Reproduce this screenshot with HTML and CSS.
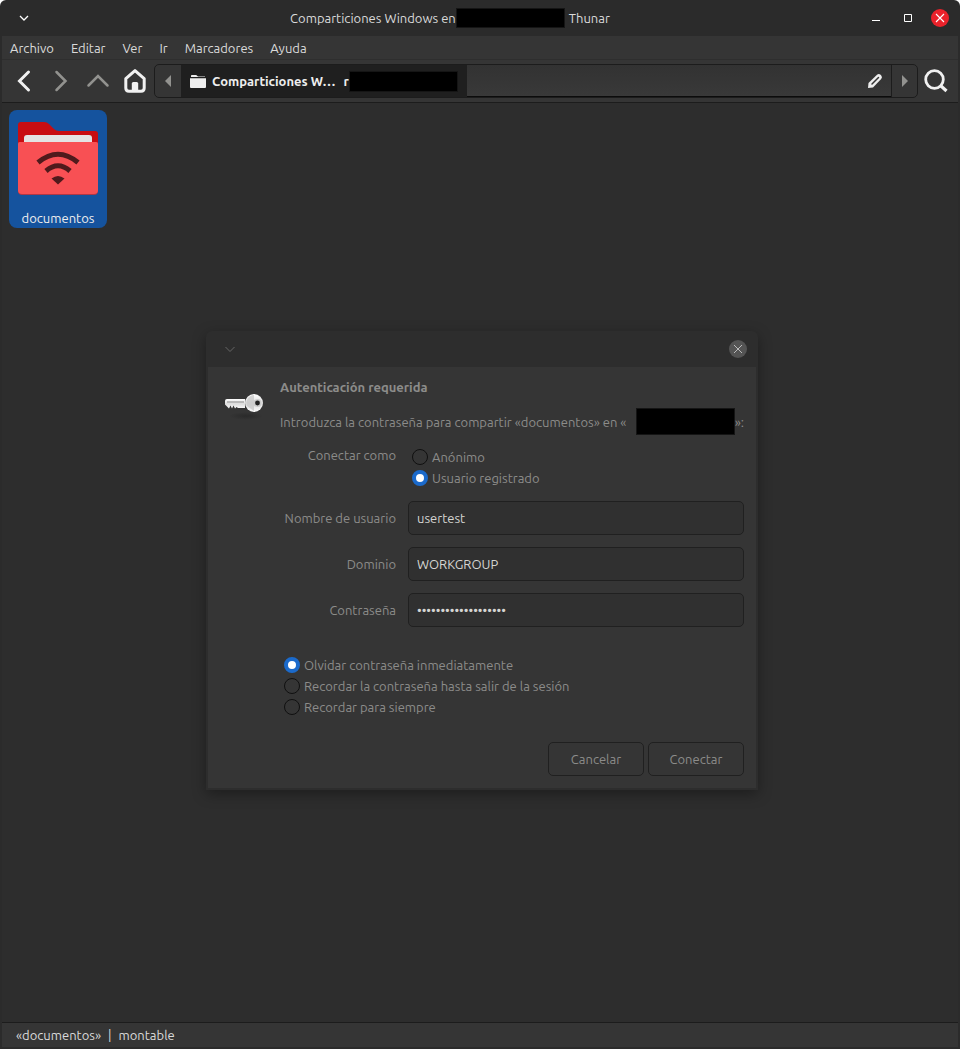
FILE: index.html
```
<!DOCTYPE html>
<html lang="es">
<head>
<meta charset="utf-8">
<title>Comparticiones Windows - Thunar</title>
<link rel="stylesheet" href="styles.css">
</head>
<body>
<div class="window">
  <header class="titlebar">
    <button class="wm-button" aria-label="Menú de la ventana">
      <svg width="20" height="20" viewBox="0 0 20 20"><path d="M6 8l4 4 4-4" fill="none" stroke="#fff" stroke-width="1.3"/></svg>
    </button>
    <h1 class="title"><span>Comparticiones Windows en</span><span class="mask mask-title"></span><span>Thunar</span></h1>
    <div class="controls">
      <button class="wm-button" aria-label="Minimizar"><svg width="20" height="20" viewBox="0 0 20 20"><path d="M6 12.5h8" stroke="#fff"/></svg></button>
      <button class="wm-button" aria-label="Maximizar"><svg width="20" height="20" viewBox="0 0 20 20"><path d="M6.500 6.500h7v7h-7z" fill="none" stroke="#fff"/></svg></button>
      <button class="wm-button" aria-label="Cerrar"><svg width="20" height="20" viewBox="0 0 20 20"><circle cx="10" cy="10" r="9" fill="#ea222b"/><path d="M6 6l8 8M14 6l-8 8" stroke="#fff" stroke-width="1.100"/></svg></button>
    </div>
  </header>

  <nav class="menubar">
    <button>Archivo</button><button>Editar</button><button>Ver</button><button>Ir</button><button>Marcadores</button><button>Ayuda</button>
  </nav>

  <div class="toolbar">
    <button class="tool" aria-label="Atrás"><svg width="28" height="28" viewBox="0 0 28 28"><path d="M18.500 5L9.500 14l9 9" class="stroke-on"/></svg></button>
    <button class="tool" aria-label="Adelante"><svg width="28" height="28" viewBox="0 0 28 28"><path d="M9.500 5l9 9-9 9" class="stroke-off"/></svg></button>
    <button class="tool" aria-label="Subir"><svg width="28" height="28" viewBox="0 0 28 28"><path d="M4.500 18.500L14 9l9.500 9.500" class="stroke-off"/></svg></button>
    <button class="tool" aria-label="Inicio"><svg width="28" height="28" viewBox="0 0 28 28"><path d="M14 3.600L4.800 11.600V21q0 3.200 3.200 3.200h12q3.200 0 3.200-3.200V11.600z" fill="none" stroke="#f1f1f1" stroke-width="3" stroke-linejoin="round"/><path d="M10.800 25v-8.500q0-1.500 1.500-1.500h3.400q1.500 0 1.500 1.500V25z" fill="#f1f1f1"/></svg></button>
    <div class="pathbar">
      <button class="path-arrow" aria-label="Ruta anterior"><svg width="8" height="12" viewBox="0 0 8 12"><path d="M7 0v12L1 6z" fill="#92928f"/></svg></button>
      <button class="crumb">
        <svg width="16" height="14" viewBox="0 0 16 14"><path d="M1 3V1.800Q1 1 1.800 1h4.400L8 2.500h7V3z" fill="#eee"/><path d="M0 4.200h16V13q0 1-1 1H1q-1 0-1-1z" fill="#eee"/></svg>
        <b>Comparticiones W…</b><b class="crumb-host">r</b><span class="mask mask-crumb"></span>
      </button>
      <div class="path-rest">
        <button class="edit" aria-label="Editar ruta"><svg width="16" height="16" viewBox="0 0 16 16"><path d="M1 15l.5-5L10 1.800q1.800-1.600 3.600 0l.6.600q1.600 1.800 0 3.600L6 14.500z" fill="#eee"/><path d="M5 11l6.500-6.500" stroke="#353535" stroke-width="1.500" stroke-linecap="round"/></svg></button>
      </div>
      <button class="path-arrow path-next" aria-label="Ruta siguiente"><svg width="8" height="12" viewBox="0 0 8 12"><path d="M1 0v12l6-6z" fill="#92928f"/></svg></button>
    </div>
    <button class="search" aria-label="Buscar"><svg width="26" height="26" viewBox="0 0 26 26"><circle cx="11.500" cy="11.500" r="8.800" fill="none" stroke="#f1f1f1" stroke-width="2.800"/><path d="M18 18l5.500 5" stroke="#f1f1f1" stroke-width="3.200"/></svg></button>
  </div>

  <main class="files">
    <button class="file">
      <svg width="82" height="76" viewBox="0 0 82 76">
        <path d="M1 5q0-3 3-3h23q3 0 5 2l5 5q2 2 5 2h36q3 0 3 3v20H1z" fill="#c80d12"/>
        <path d="M7 30V18q0-3 3-3h62q3 0 3 3v12z" fill="#e3e3e3"/>
        <path d="M1 24q0-2 2-2h76q2 0 2 2v47q0 4-4 4H5q-4 0-4-4z" fill="#b03745"/>
        <path d="M1 24q0-2 2-2h76q2 0 2 2v46q0 4-4 4H5q-4 0-4-4z" fill="#f85054"/>
        <g fill="none" stroke="#501a1c" stroke-width="5"><path d="M21 42.500q20-16.500 40 0"/><path d="M29 51q12-10.500 24 0"/></g>
        <path d="M34.500 58.500q6.500-5 13 0L41 64.500z" fill="#501a1c"/>
      </svg>
      <span>documentos</span>
    </button>
  </main>

  <footer class="statusbar"><span>«documentos»</span><span>|</span><span>montable</span></footer>

  <form class="dialog" role="dialog" aria-labelledby="auth-title">
    <div class="dialog-bar">
      <button type="button" class="wm-button" aria-label="Menú del diálogo"><svg width="20" height="20" viewBox="0 0 20 20"><path d="M5.500 8l4.500 4.500L14.500 8" fill="none" stroke="#666"/></svg></button>
      <button type="button" class="wm-button" aria-label="Cerrar diálogo"><svg width="20" height="20" viewBox="0 0 20 20"><circle cx="10" cy="10" r="9" fill="#545454"/><path d="M6 6l8 8M14 6l-8 8" stroke="#bbb"/></svg></button>
    </div>
    <div class="dialog-body">
      <svg class="key" width="44" height="48" viewBox="0 0 44 48">
        <defs>
          <linearGradient id="metal" x1="0" y1="0" x2="0" y2="1"><stop offset="0" stop-color="#fff"/><stop offset="0.500" stop-color="#ddd"/><stop offset="1" stop-color="#fafafa"/></linearGradient>
          <radialGradient id="shade"><stop offset="0" stop-color="#2a2a2a"/><stop offset="1" stop-color="#2a2a2a" stop-opacity="0"/></radialGradient>
        </defs>
        <ellipse cx="26" cy="38" rx="17" ry="4" fill="url(#shade)"/>
        <path d="M7 21h18v9h-7l-1.500-1L15 30.500l-1.500-3-1.500 3-1.500-3-1.500 3L5 26.500V23q0-2 2-2z" fill="url(#metal)"/>
        <path d="M7 24h17" stroke="#aaa" stroke-width="1.500"/>
        <circle cx="34" cy="25" r="9" fill="url(#metal)"/>
        <path d="M34 17a8 8 0 0 0-7 11l7 5z" fill="#c4c4c4" opacity=".7"/>
        <circle cx="37.500" cy="25" r="4" fill="#ccc"/>
        <circle cx="37.500" cy="25" r="2.400" fill="#222"/>
      </svg>
      <div class="dialog-content">
        <h2 id="auth-title">Autenticación requerida</h2>
        <p class="message"><span>Introduzca la contraseña para compartir «documentos» en «</span><span class="mask mask-host"></span><span>»:</span></p>
        <div class="fields">
          <span class="field-name connect-name" id="connect-as">Conectar como</span>
          <div class="radios" role="radiogroup" aria-labelledby="connect-as">
            <label><input type="radio" name="identity">Anónimo</label>
            <label><input type="radio" name="identity" checked>Usuario registrado</label>
          </div>
          <label class="field-name" for="user">Nombre de usuario</label><input class="entry" id="user" type="text" value="usertest">
          <label class="field-name" for="domain">Dominio</label><input class="entry" id="domain" type="text" value="WORKGROUP">
          <label class="field-name" for="password">Contraseña</label><input class="entry" id="password" type="password" value="aaaaaaaaaaaaaaaaaaa">
        </div>
        <div class="radios remember">
          <label><input type="radio" name="remember" checked>Olvidar contraseña inmediatamente</label>
          <label><input type="radio" name="remember">Recordar la contraseña hasta salir de la sesión</label>
          <label><input type="radio" name="remember">Recordar para siempre</label>
        </div>
        <div class="actions"><button type="button">Cancelar</button><button type="submit">Conectar</button></div>
      </div>
    </div>
  </form>
</div>
</body>
</html>
```
FILE: styles.css
```
* { box-sizing: border-box; }
body { margin: 0; background: #fff; }
body, button, input { font: 13px/18px Ubuntu, "Noto Sans", sans-serif; }
button { margin: 0; padding: 0; border: 0; background: none; color: inherit; }
h1, h2, p { margin: 0; }
svg { display: block; flex: none; }

.window {
  position: relative;
  display: flex;
  flex-direction: column;
  min-height: 100vh;
  padding: 0 2px 2px;
  border-radius: 6px 6px 0 0;
  background: #2b2b2b;
  color: #dadada;
}
.mask { flex: none; background: #000; border: 1px solid #151515; }

.titlebar { display: flex; align-items: center; height: 36px; padding: 0 8px 0 12px; }
.title { flex: 1; display: flex; align-items: center; justify-content: center; font-size: 13px; font-weight: 400; white-space: nowrap; }
.mask-title { width: 109px; height: 20px; margin-right: 4px; }
.controls { display: flex; gap: 12px; }

.menubar { display: flex; gap: 17px; height: 24px; padding: 0 8px; background: #353535; border-bottom: 1px solid #2e2e2e; }

.toolbar { display: flex; align-items: center; height: 43px; padding: 0 9px 0 3px; background: #353535; border-bottom: 1px solid #1c1c1c; }
.tool { width: 37px; display: flex; justify-content: center; }
.stroke-on, .stroke-off { fill: none; stroke: #f1f1f1; stroke-width: 3; stroke-linecap: round; }
.stroke-off { stroke: #92928f; stroke-width: 2.5; }
.pathbar { flex: 1; display: flex; height: 34px; margin-left: 1px; border: 1px solid #1c1c1c; border-radius: 5px; overflow: hidden; }
.path-arrow { width: 26px; display: flex; align-items: center; justify-content: center; }
.path-next { border-left: 1px solid #1c1c1c; }
.crumb { display: flex; align-items: center; width: 286px; padding-left: 9px; background: #1f1f1f; color: #eee; white-space: nowrap; }
.crumb b { margin-left: 6px; font-weight: 600; }
.crumb .crumb-host { margin-left: 8px; }
.mask-crumb { width: 109px; height: 21px; }
.path-rest { flex: 1; display: flex; align-items: center; justify-content: flex-end; padding-right: 8px; background: linear-gradient(#323232, #393939); border-bottom: 1px solid #0c0c0c; }
.search { margin-left: 5px; }

.files { flex: 1; padding: 7px; background: #2d2d2d; }
.file { display: flex; flex-direction: column; align-items: center; justify-content: flex-start; width: 98px; height: 118px; padding-top: 10px; border-radius: 8px; background: #15539e; color: #eee; }
.file span { margin-top: 13px; }

.statusbar { display: flex; gap: 7px; height: 25px; padding: 3px 14px; background: #353535; border-top: 1px solid #1c1c1c; }

.dialog {
  position: absolute;
  top: 331px;
  left: calc(50% + 2px);
  transform: translateX(-50%);
  width: 552px;
  padding: 0 2px 2px;
  border-radius: 6px 6px 0 0;
  background: #2d2d2d;
  box-shadow: 0 4px 14px rgba(0, 0, 0, 0.35);
  color: #8c8c8a;
}
.dialog-bar { display: flex; align-items: center; justify-content: space-between; height: 36px; padding: 0 8px 0 12px; }
.dialog-body { display: flex; gap: 16px; padding: 11px 12px 12px; background: #353535; }
.dialog-content { flex: 1; min-width: 0; }
.dialog h2 { font-size: 13px; line-height: 18px; font-weight: 700; }
.message { display: flex; align-items: center; height: 27px; margin-top: 12px; white-space: nowrap; }
.mask-host { width: 99px; height: 27px; margin-left: auto; }
.fields { display: grid; grid-template-columns: 116px 1fr; gap: 12px; align-items: center; margin-top: 11px; }
.field-name { text-align: right; white-space: nowrap; }
.connect-name { align-self: start; }
.radios { display: flex; flex-direction: column; padding-left: 4px; }
.radios label { display: flex; align-items: center; gap: 4px; height: 21px; }
.fields .radios { padding-bottom: 1px; }
.radios input {
  appearance: none;
  width: 16px;
  height: 16px;
  margin: 0;
  border: 1px solid #101010;
  border-radius: 50%;
}
.radios input:checked { border: 4px solid #1b6acb; background: #fff; }
.entry { width: 100%; height: 34px; padding: 0 8px; border: 1px solid #202020; border-radius: 5px; background: #303030; color: #d5d5d2; outline: 0; }
.remember { margin-top: 27px; }
.actions { display: flex; justify-content: flex-end; gap: 4px; margin-top: 25px; }
.actions button { width: 96px; height: 34px; border: 1px solid #202020; border-radius: 5px; }
```
